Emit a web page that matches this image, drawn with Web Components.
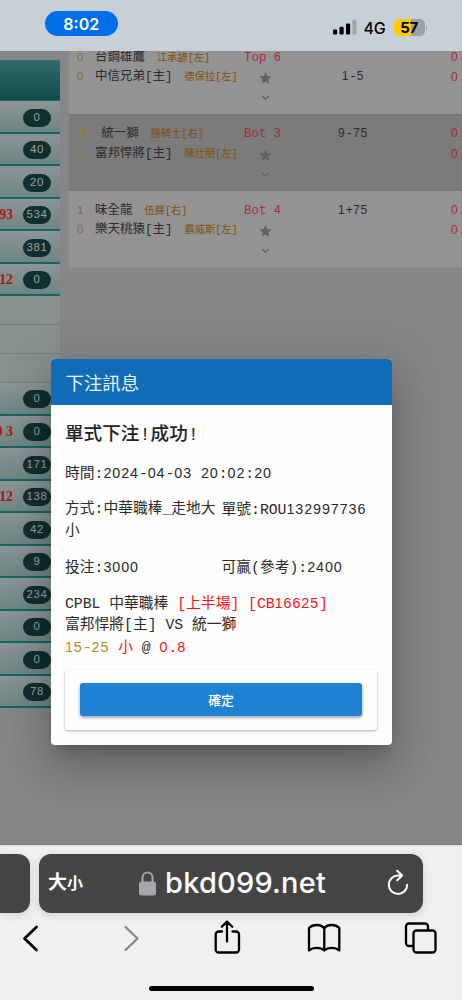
<!DOCTYPE html>
<html lang="zh-Hant">
<head>
<meta charset="utf-8">
<title>下注訊息</title>
<style>
html,body{margin:0;padding:0}
body{width:462px;height:1000px;overflow:hidden;background:#868686;font-family:"Liberation Mono","Noto Sans CJK TC",monospace}
</style>
</head>
<body>
<phone-screen></phone-screen>
<script>
const define = (name, html, setup) => {
  customElements.define(name, class extends HTMLElement {
    connectedCallback() {
      if (this.shadowRoot) return;
      const root = this.attachShadow({ mode: 'open' });
      const t = document.createElement('template');
      t.innerHTML = typeof html === 'function' ? html(this) : html;
      root.append(t.content.cloneNode(true));
      if (setup) setup(root, this);
    }
  });
};
// Digits use proportional-sans glyphs padded to the monospace advance (0.6em).
const mono = s => s.replace(/[0-9]+/g, d => `<span class="d">${d}</span>`);
const digitCss = `.d{font-family:"Liberation Sans",sans-serif;font-size:.97em;letter-spacing:.0626em}`;

define('mono-text', el => `<style>:host{display:inline}${digitCss}</style>${mono(el.textContent)}`);

define('status-bar', `<style>
:host{display:flex;box-sizing:border-box;height:51px;background:#c8cfd7;flex:none;position:relative;z-index:2;font-family:Inter,sans-serif;color:#000;padding:11px 35px 0 44.5px;align-items:flex-start}
.time{width:73.5px;height:25px;border-radius:13px;background:#006ee6;color:#fff;font-weight:600;font-size:16px;line-height:26px;text-align:center}
.sig{margin:9px 0 0 auto;display:block}
.net{font-size:16px;line-height:20px;margin:7px 0 0 7px;font-weight:500;letter-spacing:-.2px;width:23px}
.bat{margin:8px 0 0 7px;width:31px;height:16.5px;border-radius:5px;background:linear-gradient(90deg,#ffcc00 56%,#9da3ab 56%);font-weight:700;font-size:15px;line-height:17px;text-align:center;letter-spacing:-.3px}
.cap{width:1.5px;height:5px;background:#9da3ab;border-radius:0 2px 2px 0;margin:14px 0 0 1px}
</style><div class="time">8:02</div>
<svg class="sig" width="24" height="15" viewBox="0 0 24 15"><g><rect x="0" y="9.5" width="4.2" height="5" rx="1.2"/><rect x="6.5" y="6.8" width="4.2" height="7.7" rx="1.2"/><rect x="13" y="3.5" width="4.2" height="11" rx="1.2"/><rect x="19.4" y="0" width="4.2" height="14.5" rx="1.2" fill="#a0a6ae"/></g></svg>
<div class="net">4G</div><div class="bat">57</div><div class="cap"></div>`);

define('side-item', el => `<style>
:host{display:flex;box-sizing:border-box;height:32.55px;border-bottom:2px solid #176567;background:linear-gradient(#8c9595,#6d8683);align-items:center;justify-content:flex-end;padding-right:8.5px;gap:10px}
:host([blank]){height:28.9px;background:#889090;border-bottom:1px solid #777b7b}
b{font:bold 13.8px/16px "Liberation Serif",serif;color:#b31217;white-space:nowrap;margin-top:2px}
.n{width:28px;flex:none;height:18px;border-radius:9px;background:#112f31;color:#9aa3a3;font:11.8px/16px "Liberation Mono",monospace;text-align:center;margin-top:2.5px}
${digitCss}
</style>${el.hasAttribute('blank') ? '' : `${el.getAttribute('hot') ? `<b>${el.getAttribute('hot')}</b>` : ''}<div class="n">${mono(el.getAttribute('n'))}</div>`}`);

define('side-menu', () => {
  const it = (n, hot = '') => `<side-item n="${n}" hot="${hot}"></side-item>`;
  return `<style>
:host{display:block;width:59.5px;margin-top:9px;overflow:hidden;flex:none}
.h{height:41px;box-sizing:border-box;background:linear-gradient(#306b6c,#104b4d);border-top:1.5px solid #2f7775;border-bottom:1px solid #24696a}
</style><div class="h"></div>
${it(0)}${it(40)}${it(20)}${it(534, '93')}${it(381)}${it(0, '12')}
<side-item blank></side-item><side-item blank></side-item><side-item blank></side-item>
${it(0)}${it(0, '0 3')}${it(171)}${it(138, '12')}${it(42)}${it(9)}${it(234)}${it(0)}${it(0)}${it(78)}`;
});

define('game-row', el => {
  const g = k => el.getAttribute(k) || '';
  return `<style>
:host{display:grid;grid-template-columns:175px 74px 70px 63px 21px;box-sizing:border-box;height:76.5px;padding-top:9.5px;background:#939393;border-bottom:1px solid #747474;font-size:12.5px;line-height:19.6px;color:#2b2b2b}
:host([alt]){background:#7b7b7b}
:host([alt]) .s{color:#3d3200;color:#99842f}
:host(:last-child){border-bottom-color:#8c8c8c}
div{white-space:pre}
.t{padding-left:8px;display:grid;grid-template-rows:19.6px 19.6px}
.s{font-size:11.8px;color:#87701c;margin-right:11px}
.p{font-size:10.2px;color:#80500f;margin-left:12px}
.r{color:#a32f38}.o{color:#a82f28}
.m{text-align:center}
svg{display:block;margin-left:14.5px}
.star{margin-top:4px}.ch{margin-top:11px}
${digitCss}
</style>
<div class="t"><div><span class="s">${mono(g('s1'))}</span>${g('a')}<span class="p">${g('pa')}</span></div><div><span class="s">${mono(g('s2'))}</span>${g('b')}<span class="p">${g('pb')}</span></div></div>
<div class="r">${mono(g('inn'))}<svg class="star" width="13" height="12" viewBox="0 0 13 12"><path fill="#626262" d="M6.5 0l1.7 4.1 4.4.4-3.3 2.9 1 4.4-3.8-2.4-3.8 2.4 1-4.400L.4 4.500l4.400-.4z"/></svg><svg class="ch" width="13" height="6" viewBox="0 0 13 6"><path d="M3.300 1l3.200 3.200L9.700 1" fill="none" stroke="#626262" stroke-width="1.300"/></svg></div>
<div class="m">${g('low') ? '\n' : ''}${mono(g('line'))}</div><div></div>
<div class="o">${mono('0.')}
${mono('0.')}</div>`;
});

define('game-list', `<style>:host{display:block;width:393px;margin-left:9.5px;margin-top:-13px;flex:none;overflow:hidden}</style>
<game-row s1="0" a="台鋼雄鷹" pa="江承諺[左]" s2="0" b="中信兄弟[主]" pb="德保拉[左]" inn="Top 6" line="1-5" low="1"></game-row>
<game-row alt s1="11" a="統一獅" pa="勝騎士[右]" s2="2" b="富邦悍將[主]" pb="陳仕朋[左]" inn="Bot 3" line="9-75"></game-row>
<game-row s1="1" a="味全龍" pa="伍鐸[右]" s2="0" b="樂天桃猿[主]" pb="霸威斯[左]" inn="Bot 4" line="1+75"></game-row>`);

define('bet-dialog', `<style>
:host{display:block;box-sizing:border-box;width:341px;height:386px;border-radius:4px;overflow:hidden;background:#fefefe;color:#2b2b2b;font-size:14.78px;line-height:21.4px;
box-shadow:0 11px 15px -7px rgba(0,0,0,.2),0 24px 38px 3px rgba(0,0,0,.14),0 9px 46px 8px rgba(0,0,0,.12)}
header{height:46px;background:#116cb6;color:#e9f2fa;font-size:18.400px;line-height:46px;padding-left:15px;font-weight:400;font-family:"Noto Sans CJK TC",sans-serif}
main{padding:0 14.5px}
h2{margin:17.500px 0 0;font-size:18.600px;font-weight:500;line-height:25px;color:#222}
.row{display:grid;grid-template-columns:156.500px 156px;margin-top:14.800px;height:21.400px}
.row.tall{height:42.800px;margin-top:15.500px}
.row.first{margin-top:15px}
.detail{margin-top:14.600px;white-space:pre-line;height:64.200px}
.r{color:#fb1118}.y{color:#b98a18}
.card{margin-top:12.800px;height:60.500px;width:312px;box-sizing:border-box;padding:13.500px 15px;border-radius:3px;box-shadow:0 1px 3px rgba(0,0,0,.2),0 1px 2px rgba(0,0,0,.14)}
button{all:unset;display:block;width:282px;height:33px;border-radius:3px;background:#1d82d4;color:#fff;font:500 12.800px/28px "Noto Sans CJK TC",sans-serif;text-align:center;box-shadow:0 2px 3px rgba(0,0,0,.25),0 1px 4px rgba(0,0,0,.15)}
</style>
<header>下注訊息</header>
<main><h2>單式下注!成功!</h2>
<div class="row first"><div style="grid-column:1/3"><mono-text>時間:2024-04-03 20:02:20</mono-text></div></div>
<div class="row tall"><div><mono-text>方式:中華職棒_走地大小</mono-text></div><div><mono-text>單號:ROU132997736</mono-text></div></div>
<div class="row"><div><mono-text>投注:3000</mono-text></div><div><mono-text>可贏(參考):2400</mono-text></div></div>
<div class="detail">CPBL 中華職棒 <mono-text class="r">[上半場] [CB16625]</mono-text>
富邦悍將[主] VS 統一獅
<mono-text class="y">15-25</mono-text> <span class="r">小</span> @ <mono-text class="r">0.8</mono-text></div>
<div class="card"><button>確定</button></div>
</main>`);

define('browser-bar', `<style>
:host{display:block;box-sizing:border-box;height:155px;background:#f0f0f1;border-top:1px solid #ddd;position:relative;z-index:2;overflow:hidden;flex:none}
.tabs{display:flex;gap:9px;margin:7.500px 0 0}
.prev,.url{height:59px;background:#444;box-shadow:0 2px 10px rgba(0,0,0,.13);box-sizing:border-box}
.prev{width:30px;border-radius:0 12px 12px 0}
.url{width:384px;border-radius:12px;color:#fff;display:flex;align-items:center;font-family:Inter,"Noto Sans CJK TC",sans-serif;padding:0 14px 0 9px}
.aa{font-weight:700;font-size:19px;width:36px;line-height:30px;display:flex;align-items:baseline}
.aa small{font-size:16px}
.lock{margin-left:55px}.host{font-size:29px;font-weight:500;line-height:36px;margin-left:9px;letter-spacing:.2px;white-space:nowrap}
.reload{margin-left:auto;margin-top:-3px}
.tools{display:block}
.home{width:165px;height:5.500px;border-radius:3px;background:#000;margin:25px 0 0 148.500px}
svg{display:block;fill:none;stroke:#000;stroke-width:2.300;stroke-linecap:round;stroke-linejoin:round}
</style>
<div class="tabs"><div class="prev"></div><div class="url"><div class="aa">大<small>小</small></div>
<svg class="lock" width="17" height="25" viewBox="0 0 17 25"><rect x="0" y="10.500" width="17" height="14" rx="2.500" fill="#a7a6ad" stroke="none"/><path d="M3.500 11V6.500a5 5 0 0 1 10 0V11" stroke="#a7a6ad" stroke-width="2"/></svg>
<div class="host">bkd099.net</div>
<svg class="reload" width="22" height="26" viewBox="0 0 22 26" style="stroke:#fff;stroke-width:2"><path d="M14 6.500H11a9.200 9.200 0 1 0 9.200 9.200M10.200 1.800l5 4.700-5 4.700"/></svg></div></div>
<svg class="tools" width="462" height="48" viewBox="0 913 462 48">
<path d="M36.500 927L24.500 938.500l12 11.500" stroke-width="2.800"/>
<path d="M125.500 927l12 11.500-12 11.500" stroke="#858585" style="stroke:#858585"/>
<path d="M222 931.500h-3.300a3 3 0 0 0-3 3v15a3 3 0 0 0 3 3h17.300a3 3 0 0 0 3-3v-15a3 3 0 0 0-3-3H232.500M227 941.500v-19.500M221.800 926.800l5.200-5.200 5.200 5.200"/>
<path d="M324.300 928.500c-3-4.600-11.500-4.600-15.300-.5v22.500c4-3.500 11.500-3.500 15.300 0c3.800-3.500 11.300-3.500 15 0v-22.500c-3.700-4.100-12-4.100-15 .5zv22"/>
<path d="M412.500 946h-3.500a3 3 0 0 1-3-3v-16.500a3 3 0 0 1 3-3H425a3 3 0 0 1 3 3v3.500"/><rect x="413.500" y="930.500" width="22" height="22" rx="3"/>
</svg>
<div class="home"></div>`);

define('phone-screen', `<style>
:host{display:flex;flex-direction:column;width:462px;height:1000px;overflow:hidden;position:relative}
.page{height:794px;flex:none;display:flex;align-items:flex-start;overflow:hidden;background:#868686}
bet-dialog{position:absolute;left:50.500px;top:359px}
</style><status-bar></status-bar><div class="page"><side-menu></side-menu><game-list></game-list></div><browser-bar></browser-bar><bet-dialog></bet-dialog>`);
</script>
</body>
</html>
